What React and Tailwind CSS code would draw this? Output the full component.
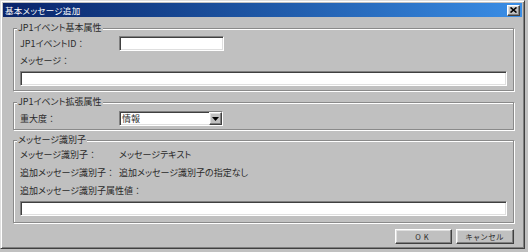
import React from 'react'

// sunken 3d field / raised 3d button (classic windows look)
const sunken = 'bg-white border border-t-[#808080] border-l-[#808080] border-r-white border-b-white shadow-[inset_1px_1px_0_#404040,inset_-1px_-1px_0_#dfdfdf]'
const raised = 'bg-[#c0c0c0] border border-t-white border-l-white border-r-[#404040] border-b-[#404040] shadow-[inset_-1px_-1px_0_#808080,inset_1px_1px_0_#dfdfdf]'
const group = 'border border-[#8a8a8a] px-[6px] shadow-[inset_1px_1px_0_#fff,1px_1px_0_#fff]'
const legend = '-ml-[3px] px-[1px] h-[12px] leading-[12px] bg-[#c0c0c0]'

// full width colon, like the original font
const Colon = () => <span className='[font-feature-settings:normal]'>：</span>

function Row({ label, children }) {
  return (
    <div className='flex items-center h-[12px] leading-[12px]'>
      <span className='w-[99px] shrink-0'>{label}<Colon /></span>
      {children}
    </div>
  )
}

export default function App() {
  return (
    <div className="w-[528px] h-[252px] bg-[#c0c0c0] text-[9px] text-[#2a2a2a] font-['Noto_Sans_CJK_JP','Noto_Sans',sans-serif] [font-feature-settings:'palt']">
      <div className='w-[525px] h-[249px] border border-t-[#dfdfdf] border-l-[#dfdfdf] border-r-[#404040] border-b-[#404040] shadow-[inset_1px_1px_0_#fff,inset_-1px_-1px_0_#808080] p-[2px] flex flex-col'>
        {/* title bar */}
        <div className='h-[14px] flex items-center justify-between bg-gradient-to-r from-[#0a246a] to-[#3a8ee6] pl-[2px] pr-[2px]'>
          <span className='text-white text-[8.5px] leading-[12px] tracking-[0.3px]'>基本メッセージ追加</span>
          <button className={`${raised} w-[13px] h-[11px] flex items-center justify-center`}>
            <svg width='7' height='6' viewBox='0 0 7 6'>
              <path d='M0.5 0.5 L6.5 5.5 M6.5 0.5 L0.5 5.5' stroke='#000' strokeWidth='1.6' />
            </svg>
          </button>
        </div>

        <div className='pl-[10px] pr-[8px] flex flex-col'>
          {/* group 1 */}
          <fieldset className={`${group} mt-[5px] pt-[2px] pb-[4px]`}>
            <legend className={legend}>JP1イベント基本属性</legend>
            <div className='flex items-center h-[15px]'>
              <span className='w-[99px] shrink-0'>JP1イベントID<Colon /></span>
              <div className={`${sunken} w-[105px] h-[15px]`}></div>
            </div>
            <div className='mt-[4px] h-[12px] leading-[12px]'>メッセージ<Colon /></div>
            <div className={`${sunken} mt-[4px] h-[15px] w-full`}></div>
          </fieldset>

          {/* group 2 */}
          <fieldset className={`${group} mt-[5px] pt-[3px] pb-[3px]`}>
            <legend className={legend}>JP1イベント拡張属性</legend>
            <div className='flex items-center h-[15px]'>
              <span className='w-[99px] shrink-0'>重大度<Colon /></span>
              <div className={`${sunken} w-[104px] h-[15px] flex items-center justify-between`}>
                <span className='pl-[2px] leading-[12px]'>情報</span>
                <div className={`${raised} w-[13px] h-[13px] flex items-center justify-center`}>
                  <svg width='7' height='4' viewBox='0 0 7 4'>
                    <path d='M0 0 H7 L3.5 4 Z' fill='#000' />
                  </svg>
                </div>
              </div>
            </div>
          </fieldset>

          {/* group 3 */}
          <fieldset className={`${group} mt-[4px] pt-[3px] pb-[6px]`}>
            <legend className={legend}>メッセージ識別子</legend>
            <Row label='メッセージ識別子'>
              <span>メッセージテキスト</span>
            </Row>
            <div className='mt-[6px]'>
              <Row label='追加メッセージ識別子'>
                <span>追加メッセージ識別子の指定なし</span>
              </Row>
            </div>
            <div className='mt-[6px] h-[12px] leading-[12px]'>追加メッセージ識別子属性値<Colon /></div>
            <div className={`${sunken} mt-[4px] h-[15px] w-full`}></div>
          </fieldset>

          {/* buttons */}
          <div className='mt-[6px] flex justify-end gap-[4px]'>
            <button className={`${raised} w-[57px] h-[15px] text-[7.5px] leading-[12px] tracking-[3px]`}>OK</button>
            <button className={`${raised} w-[58px] h-[15px] text-[7.5px] leading-[12px] tracking-[1px]`}>キャンセル</button>
          </div>
        </div>
      </div>
    </div>
  )
}
